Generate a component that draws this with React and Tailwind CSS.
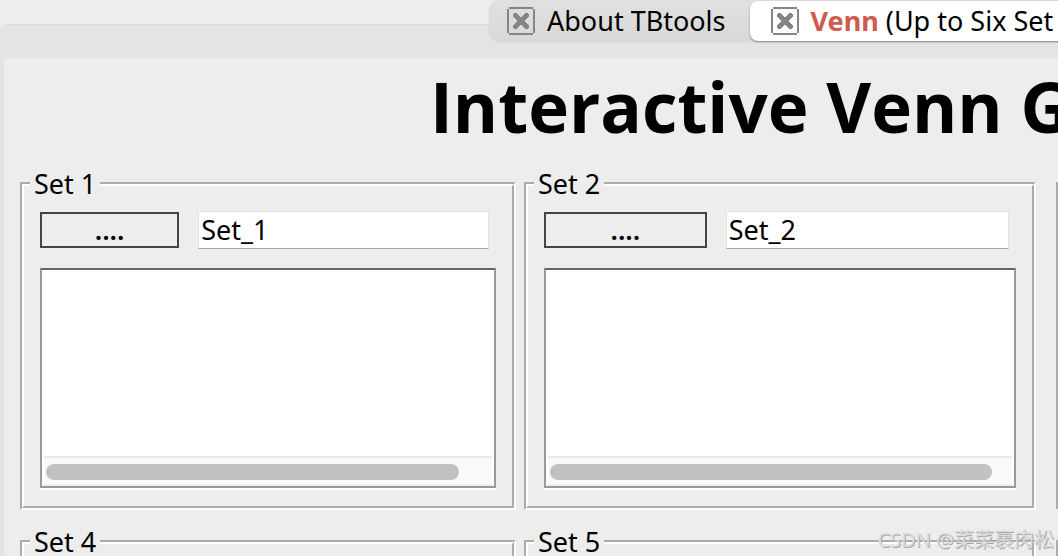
import React, { useState } from 'react';
import { clsx } from 'clsx';

const CloseIcon = () => (
  <svg width="28" height="28" viewBox="0 0 28 28" fill="none" shapeRendering="crispEdges" aria-hidden="true">
    <path d="M2 1h24M2 27h24M1 2v24M27 2v24" stroke="#858585" strokeWidth="2" />
    <path
      d="M6 7h1v-1h3v1h1v1h1v1h1v1h2v-1h1v-1h1v-1h1v-1h3v1h1v3h-1v1h-1v1h-1v1h-1v2h1v1h1v1h1v1h1v3h-1v1h-3v-1h-1v-1h-1v-1h-1v-1h-2v1h-1v1h-1v1h-1v1h-3v-1h-1v-3h1v-1h1v-1h1v-1h1v-2h-1v-1h-1v-1h-1v-1h-1z"
      fill="#858585"
    />
  </svg>
);

const Tab = ({ active, onSelect, children }) => (
  <div
    className={clsx(
      'flex items-center gap-3 shrink-0 pl-[18px] pr-6',
      active && 'grow h-10 pl-[21px] bg-white rounded-l-lg shadow-[0_1px_2px_#00000066]'
    )}
  >
    <button type="button" aria-label="Close tab" className="shrink-0">
      <CloseIcon />
    </button>
    <button type="button" role="tab" aria-selected={active} onClick={onSelect} className="whitespace-nowrap">
      {children}
    </button>
  </div>
);

const SetPanel = ({ number, buttonClass, thumbClass }) => {
  const [name, setName] = useState(`Set_${number}`);
  const [items, setItems] = useState('');

  return (
    <fieldset className="min-w-0 border-4 border-white [border-style:groove] px-4 pb-[18px]">
      <legend className="-ml-[10px] px-1 leading-7">Set {number}</legend>

      <div className="flex items-center mt-[13px] mr-[7px] gap-[19px]">
        <button
          type="button"
          aria-label={`Choose file for set ${number}`}
          className={clsx('h-9 border-2 border-[#444] leading-8 font-semibold', buttonClass)}
        >
          ....
        </button>
        <input
          type="text"
          aria-label={`Name of set ${number}`}
          value={name}
          onChange={(e) => setName(e.target.value)}
          className="h-[38px] min-w-0 flex-1 bg-white border border-[#e2e2e2] border-b-[#a9a9a9] px-[2px] outline-none"
        />
      </div>

      <div className="mt-[19px] bg-white border-2 border-[#999] border-t-[#666] shadow-[0_2px_0_#fff]">
        <textarea
          aria-label={`Items of set ${number}`}
          value={items}
          onChange={(e) => setItems(e.target.value)}
          className="block w-full h-[186px] resize-none outline-none px-1"
        />
        {/* Horizontal scrollbar */}
        <div className="mx-[2px] h-[30px] border-y-2 border-t-[#e8e8e8] border-b-[#eee] bg-[#fafafa] px-[2px] py-[6px]">
          <div className={clsx('h-4 rounded-full bg-[#c1c1c1]', thumbClass)} />
        </div>
      </div>
    </fieldset>
  );
};

const EmptyPanel = ({ number }) => (
  <fieldset className="min-w-0 h-80 border-4 border-white [border-style:groove] px-4">
    <legend className="-ml-[10px] px-1 leading-7">Set {number}</legend>
  </fieldset>
);

// The third column runs past the right side of the window
const SidePanel = () => (
  <div className="ml-3 mt-3 w-96 border-4 border-white [border-style:groove]" />
);

const App = () => {
  const [tab, setTab] = useState('venn');

  return (
    <div className="relative h-screen overflow-hidden bg-[#ededed] text-black text-[27px] font-['Noto_Sans','Noto_Sans_CJK_SC',sans-serif]">
      {/* Tabs */}
      <header className="relative z-10 h-6 pl-[489px]">
        <div
          role="tablist"
          className="flex items-center h-[42px] rounded-l-xl bg-linear-to-b from-[#e0e0e0] to-[#d8d8d8] shadow-[0_0_1px_#00000040]"
        >
          <Tab active={tab === 'about'} onSelect={() => setTab('about')}>About TBtools</Tab>
          <Tab active={tab === 'venn'} onSelect={() => setTab('venn')}>
            <span className="font-bold text-[#d05a4c]">Venn</span> (Up to Six Set
          </Tab>
        </div>
      </header>

      <div className="rounded-tl-lg border-t border-[#dcdcdc] bg-[#e4e4e4] pt-[33px] pl-1">
        <main className="bg-[#ededed] pl-4">
          <h1 className="mb-4 pl-[410px] font-['Open_Sans','Noto_Sans',sans-serif] text-[69px] leading-24 font-bold whitespace-nowrap">
            Interactive Venn G
          </h1>

          <div className="grid grid-cols-[minmax(0,31fr)_minmax(0,32fr)_14px] gap-x-2 gap-y-[18px]">
            <SetPanel number={1} buttonClass="w-[31%]" thumbClass="w-[93%]" />
            <SetPanel number={2} buttonClass="w-[35%]" thumbClass="w-[96%]" />
            <SidePanel />
            <EmptyPanel number={4} />
            <EmptyPanel number={5} />
            <SidePanel />
          </div>
        </main>
      </div>

      <p className="absolute right-1 bottom-[2px] text-xl leading-7 text-[#dcdcdc] [text-shadow:1px_1px_0_#a8a8a8]">
        CSDN @菜菜裹肉松
      </p>
    </div>
  );
};

export default App;
